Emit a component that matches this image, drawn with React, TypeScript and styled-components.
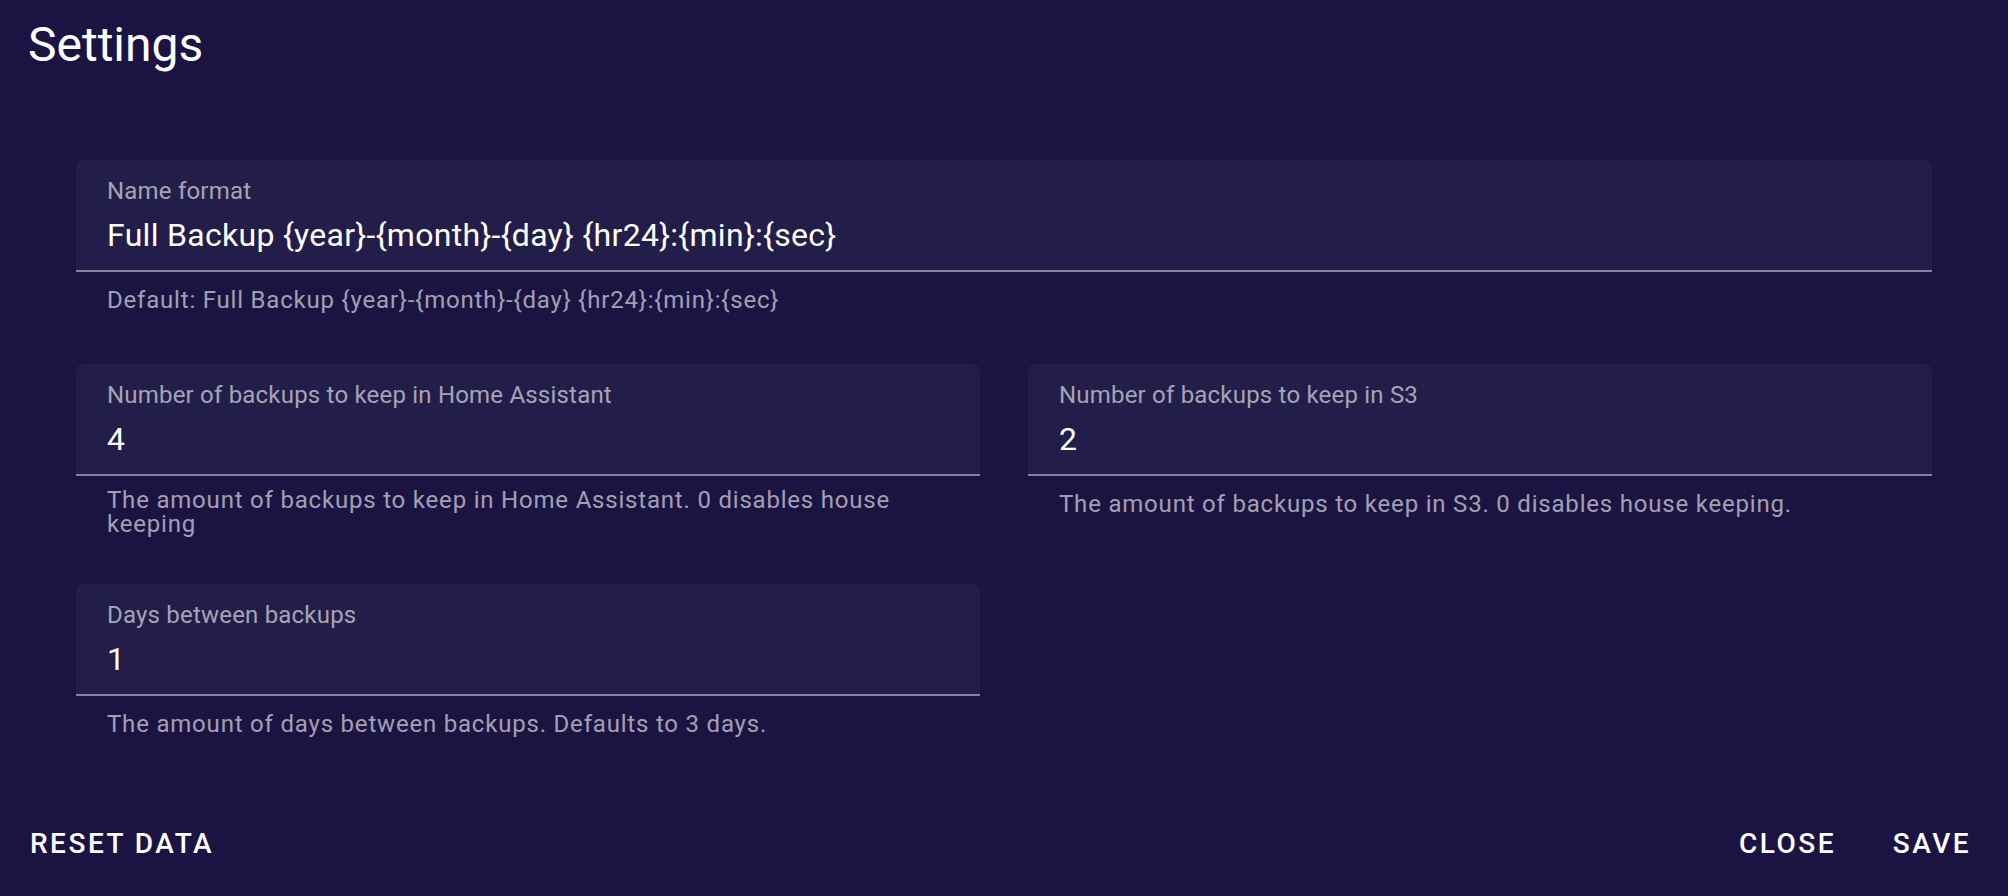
import styled, { createGlobalStyle } from "styled-components";

const GlobalStyle = createGlobalStyle`
  html, body {
    margin: 0;
    padding: 0;
    background: #1b1442;
  }
  * {
    box-sizing: border-box;
  }
`;

const Page = styled.div`
  height: 100vh;
  display: flex;
  flex-direction: column;
  background: #1b1442;
  font-family: Roboto, "Liberation Sans", sans-serif;
  color: #ffffff;
`;

const Title = styled.h2`
  margin: 0;
  padding: 16px 28px;
  font-size: 48px;
  line-height: 58px;
  font-weight: 400;
`;

const Content = styled.div`
  flex: 1;
  padding: 70px 76px 0;
  display: flex;
  flex-direction: column;
  gap: 48px;
`;

const Row = styled.div<{ $cols: number }>`
  display: grid;
  grid-template-columns: repeat(${(p) => p.$cols}, 1fr);
  column-gap: 48px;
  align-items: start;
`;

const Field = styled.div`
  display: flex;
  flex-direction: column;
`;

const InputBox = styled.div`
  height: 112px;
  padding: 19px 31px 0;
  background: rgba(255, 255, 255, 0.04);
  border-radius: 8px 8px 0 0;
  border-bottom: 2px solid rgba(255, 255, 255, 0.45);
`;

const Label = styled.label`
  display: block;
  font-size: 24px;
  line-height: 24px;
  letter-spacing: 0.2px;
  color: rgba(255, 255, 255, 0.6);
`;

const Value = styled.div`
  margin-top: 9px;
  font-size: 32px;
  line-height: 46px;
  letter-spacing: 0.3px;
  color: #ffffff;
  white-space: nowrap;
`;

// single lines sit centred in the min-height, wrapped ones start at the top
const Helper = styled.p`
  margin: 12px 31px 0;
  min-height: 32px;
  display: flex;
  align-items: center;
  font-size: 24px;
  line-height: 24px;
  letter-spacing: 0.8px;
  color: rgba(255, 255, 255, 0.6);
`;

const Actions = styled.div`
  display: flex;
  justify-content: space-between;
  align-items: center;
  padding: 16px 12px 16px 14px;
`;

const ButtonGroup = styled.div`
  display: flex;
  gap: 16px;
`;

const Button = styled.button`
  min-width: 128px;
  padding: 12px 16px;
  border: none;
  border-radius: 8px;
  background: transparent;
  color: #ffffff;
  font-family: Roboto, "Liberation Sans", sans-serif;
  font-size: 28px;
  font-weight: 500;
  line-height: 49px;
  letter-spacing: 2.5px;
  text-transform: uppercase;
  cursor: pointer;
`;

type TextFieldProps = {
  label: string;
  value: string;
  helper: string;
};

function TextField({ label, value, helper }: TextFieldProps) {
  return (
    <Field>
      <InputBox>
        <Label>{label}</Label>
        <Value>{value}</Value>
      </InputBox>
      <Helper>{helper}</Helper>
    </Field>
  );
}

function App() {
  return (
    <>
      <GlobalStyle />
      <Page>
        <Title>Settings</Title>
        <Content>
          <Row $cols={1}>
            <TextField
              label="Name format"
              value="Full Backup {year}-{month}-{day} {hr24}:{min}:{sec}"
              helper="Default: Full Backup {year}-{month}-{day} {hr24}:{min}:{sec}"
            />
          </Row>
          <Row $cols={2}>
            <TextField
              label="Number of backups to keep in Home Assistant"
              value="4"
              helper="The amount of backups to keep in Home Assistant. 0 disables house keeping"
            />
            <TextField
              label="Number of backups to keep in S3"
              value="2"
              helper="The amount of backups to keep in S3. 0 disables house keeping."
            />
          </Row>
          <Row $cols={2}>
            <TextField
              label="Days between backups"
              value="1"
              helper="The amount of days between backups. Defaults to 3 days."
            />
          </Row>
        </Content>
        <Actions>
          <Button>Reset data</Button>
          <ButtonGroup>
            <Button>Close</Button>
            <Button>Save</Button>
          </ButtonGroup>
        </Actions>
      </Page>
    </>
  );
}

export default App;
